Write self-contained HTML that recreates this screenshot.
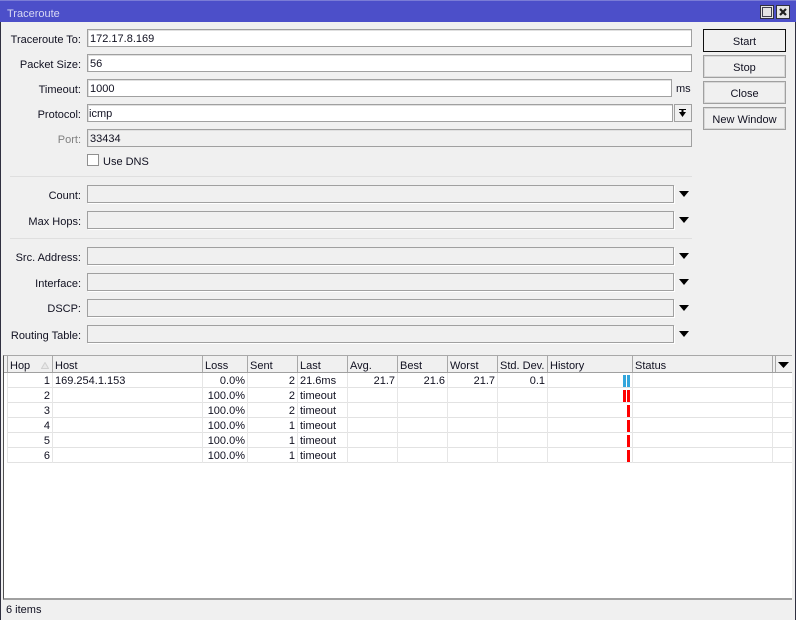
<!DOCTYPE html>
<html><head><meta charset="utf-8"><style>
html,body{margin:0;padding:0;background:#f0f0f0}
#w{position:relative;width:796px;height:620px;overflow:hidden;background:#f0f0f0;font:11px/14px "Liberation Sans",sans-serif;color:#101020}
#w div{position:absolute;box-sizing:border-box}
.l{left:0;width:81px;text-align:right;white-space:nowrap;margin-top:1px}
.f{left:87px;height:18px;background:#fff;border:1px solid #a0a0a0;box-shadow:inset 1px 1px 0 #e0e0e0;padding:2px 0 0 2px;white-space:nowrap}
.d{background:#f0f0f0;border:1px solid #a0a0a0;box-shadow:1px 1px 0 #fff;width:587px}
.b{left:703px;width:83px;height:23px;border:1px solid #a0a0a0;box-shadow:inset 0 0 0 1px #d8d8d8;text-align:center;padding-top:5px}
.s{left:10px;width:682px;height:1px;background:#dfdfdf}
.h{top:359px;white-space:nowrap}
.v{top:373px;height:90px;width:1px;background:#e6e6e6}
.vh{top:356px;width:1px;height:16px;background:#a8a8a8}
.r{left:7px;width:785px;height:1px;background:#e2e2e2}
.c{white-space:nowrap}
.n{text-align:right;white-space:nowrap}
.p{width:3px;height:12px;background:#f00}
svg{position:absolute}
</style></head><body><div id="w">
<div style="left:0;top:0;width:796px;height:22px;background:#4c4fc9"></div>
<div style="left:0;top:0;width:796px;height:1px;background:#7a7cd6"></div>
<div style="left:0;top:22px;width:1px;height:598px;background:#303040"></div>
<div style="left:795px;top:22px;width:1px;height:598px;background:#303040"></div>
<div style="left:7px;top:7px;color:#d8d8f4">Traceroute</div>
<div style="left:760px;top:5px;width:14px;height:14px;background:#e4e4e4;border:1px solid #303040"></div>
<div style="left:762px;top:7px;width:10px;height:10px;border:1px solid #404050"></div>
<div style="left:776px;top:5px;width:14px;height:14px;background:#e4e4e4;border:1px solid #303040"></div>
<svg style="left:776px;top:5px" width="14" height="14"><path d="M4 4L10 10M10 4L4 10" stroke="#202020" stroke-width="2.2" fill="none"/></svg>

<div class="l" style="top:32px">Traceroute To:</div><div class="f" style="top:29px;width:605px">172.17.8.169</div>
<div class="l" style="top:57px">Packet Size:</div><div class="f" style="top:54px;width:605px">56</div>
<div class="l" style="top:82px">Timeout:</div><div class="f" style="top:79px;width:585px">1000</div>
<div style="left:676px;top:82px">ms</div>
<div class="l" style="top:107px">Protocol:</div><div class="f" style="top:104px;width:586px;padding-left:1px">icmp</div>
<div style="left:674px;top:104px;width:18px;height:18px;border:1px solid #a0a0a0"></div>
<svg style="left:674px;top:104px" width="18" height="18"><path d="M5 5H12V6H5ZM5 8H12L8.5 13Z" fill="#000"/><path d="M7.5 6H9.5V9H7.5Z" fill="#000"/></svg>
<div class="l" style="top:132px;color:#808080">Port:</div><div class="f" style="top:129px;width:605px;background:#f0f0f0">33434</div>
<div style="left:87px;top:154px;width:12px;height:12px;background:#fff;border:1px solid #909090"></div>
<div style="left:103px;top:155px">Use DNS</div>
<div class="s" style="top:176px"></div>

<div class="l" style="top:188px">Count:</div><div class="f d" style="top:185px"></div>
<svg style="left:679px;top:191px" width="10" height="6"><path d="M0 0H10L5 6Z"/></svg>
<div class="l" style="top:214px">Max Hops:</div><div class="f d" style="top:211px"></div>
<svg style="left:679px;top:217px" width="10" height="6"><path d="M0 0H10L5 6Z"/></svg>
<div class="s" style="top:238px"></div>
<div class="l" style="top:250px">Src. Address:</div><div class="f d" style="top:247px"></div>
<svg style="left:679px;top:253px" width="10" height="6"><path d="M0 0H10L5 6Z"/></svg>
<div class="l" style="top:276px">Interface:</div><div class="f d" style="top:273px"></div>
<svg style="left:679px;top:279px" width="10" height="6"><path d="M0 0H10L5 6Z"/></svg>
<div class="l" style="top:301px">DSCP:</div><div class="f d" style="top:299px"></div>
<svg style="left:679px;top:305px" width="10" height="6"><path d="M0 0H10L5 6Z"/></svg>
<div class="l" style="top:328px">Routing Table:</div><div class="f d" style="top:325px"></div>
<svg style="left:679px;top:331px" width="10" height="6"><path d="M0 0H10L5 6Z"/></svg>

<div class="b" style="top:29px;border-color:#101010;box-shadow:none">Start</div>
<div class="b" style="top:55px">Stop</div>
<div class="b" style="top:81px">Close</div>
<div class="b" style="top:107px">New Window</div>

<div style="left:3px;top:355px;width:789px;height:245px;background:#fff;border-top:1px solid #a8a8a8;border-left:1px solid #505050;border-bottom:2px solid #a0a0a0"></div>
<div style="left:4px;top:356px;width:788px;height:17px;background:#f0f0f0;border-bottom:1px solid #a0a0a0"></div>
<div class="vh" style="left:7px"></div><div class="vh" style="left:52px"></div><div class="vh" style="left:202px"></div><div class="vh" style="left:247px"></div><div class="vh" style="left:297px"></div><div class="vh" style="left:347px"></div><div class="vh" style="left:397px"></div><div class="vh" style="left:447px"></div><div class="vh" style="left:497px"></div><div class="vh" style="left:547px"></div><div class="vh" style="left:632px"></div><div class="vh" style="left:772px"></div><div class="vh" style="left:775px"></div>
<div class="h" style="left:10px">Hop</div>
<svg style="left:41px;top:362px" width="8" height="7"><path d="M4 0.5L7.5 6.5H0.5Z" fill="#e8e8e8" stroke="#d0d0d0"/></svg>
<div class="h" style="left:55px">Host</div><div class="h" style="left:205px">Loss</div><div class="h" style="left:250px">Sent</div><div class="h" style="left:300px">Last</div><div class="h" style="left:350px">Avg.</div><div class="h" style="left:400px">Best</div><div class="h" style="left:450px">Worst</div><div class="h" style="left:500px">Std. Dev.</div><div class="h" style="left:550px">History</div><div class="h" style="left:635px">Status</div>
<svg style="left:778px;top:362px" width="11" height="6"><path d="M0 0H11L5.5 6Z"/></svg>

<div class="r" style="top:387px"></div><div class="r" style="top:402px"></div><div class="r" style="top:417px"></div><div class="r" style="top:432px"></div><div class="r" style="top:447px"></div><div class="r" style="top:462px"></div>
<div class="v" style="left:7px"></div><div class="v" style="left:52px"></div><div class="v" style="left:202px"></div><div class="v" style="left:247px"></div><div class="v" style="left:297px"></div><div class="v" style="left:347px"></div><div class="v" style="left:397px"></div><div class="v" style="left:447px"></div><div class="v" style="left:497px"></div><div class="v" style="left:547px"></div><div class="v" style="left:632px"></div><div class="v" style="left:772px"></div>

<div class="n" style="left:20px;width:30px;top:374px">1</div><div class="c" style="left:55px;top:374px">169.254.1.153</div><div class="n" style="left:200px;width:45px;top:374px">0.0%</div><div class="n" style="left:260px;width:35px;top:374px">2</div><div class="c" style="left:300px;top:374px">21.6ms</div><div class="n" style="left:350px;width:45px;top:374px">21.7</div><div class="n" style="left:400px;width:45px;top:374px">21.6</div><div class="n" style="left:450px;width:45px;top:374px">21.7</div><div class="n" style="left:500px;width:45px;top:374px">0.1</div>
<div class="n" style="left:20px;width:30px;top:389px">2</div><div class="n" style="left:200px;width:45px;top:389px">100.0%</div><div class="n" style="left:260px;width:35px;top:389px">2</div><div class="c" style="left:300px;top:389px">timeout</div>
<div class="n" style="left:20px;width:30px;top:404px">3</div><div class="n" style="left:200px;width:45px;top:404px">100.0%</div><div class="n" style="left:260px;width:35px;top:404px">2</div><div class="c" style="left:300px;top:404px">timeout</div>
<div class="n" style="left:20px;width:30px;top:419px">4</div><div class="n" style="left:200px;width:45px;top:419px">100.0%</div><div class="n" style="left:260px;width:35px;top:419px">1</div><div class="c" style="left:300px;top:419px">timeout</div>
<div class="n" style="left:20px;width:30px;top:434px">5</div><div class="n" style="left:200px;width:45px;top:434px">100.0%</div><div class="n" style="left:260px;width:35px;top:434px">1</div><div class="c" style="left:300px;top:434px">timeout</div>
<div class="n" style="left:20px;width:30px;top:449px">6</div><div class="n" style="left:200px;width:45px;top:449px">100.0%</div><div class="n" style="left:260px;width:35px;top:449px">1</div><div class="c" style="left:300px;top:449px">timeout</div>

<div class="p" style="left:623px;top:375px;background:#33a6dc"></div><div class="p" style="left:627px;top:375px;background:#33a6dc"></div>
<div class="p" style="left:623px;top:390px"></div><div class="p" style="left:627px;top:390px"></div>
<div class="p" style="left:627px;top:405px"></div><div class="p" style="left:627px;top:420px"></div><div class="p" style="left:627px;top:435px"></div><div class="p" style="left:627px;top:450px"></div>

<div style="left:6px;top:603px">6 items</div>
</div></body></html>
